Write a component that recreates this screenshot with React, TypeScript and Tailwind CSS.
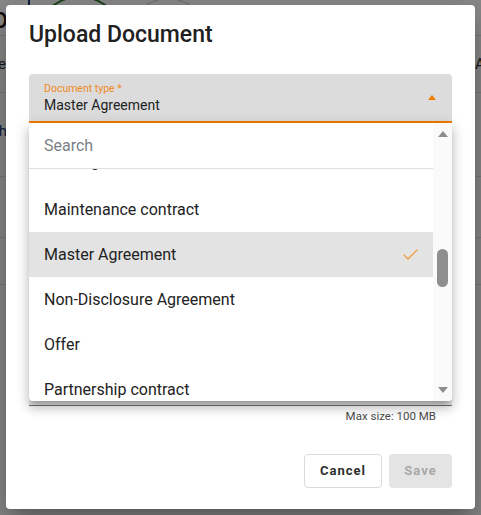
import React from "react";

const options = [
  "Leasing contract",
  "Maintenance contract",
  "Master Agreement",
  "Non-Disclosure Agreement",
  "Offer",
  "Partnership contract",
  "Purchase order",
];

function Triangle({ up, className }: { up?: boolean; className?: string }) {
  return (
    <svg width="10" height="6" viewBox="0 0 10 6" className={className}>
      <path d={up ? "M0 6 L5 0 L10 6 Z" : "M0 0 L5 6 L10 0 Z"} fill="currentColor" />
    </svg>
  );
}

function Check() {
  return (
    <svg width="15" height="11" viewBox="0 0 15 11" fill="none">
      <path d="M0.6 5.6 L5 10 L14.4 0.6" stroke="#f29a3c" strokeWidth="1.3" />
    </svg>
  );
}

function PageBehind() {
  return (
    <div className="w-full">
      <div className="h-[36px] border-b border-[#e2e2e2] flex items-start">
        <div className="w-[8px] flex justify-end">
          <span className="text-[30px] leading-[36px] text-[#1c1c1c] whitespace-nowrap">Sp</span>
        </div>
        <div className="w-[2px] h-[14px] bg-[#1a3a7a] ml-[20px]" />
        <div className="w-[91px] h-[91px] rounded-full border-2 border-[#2e7d32] ml-[4px] -mt-[4px] shrink-0" />
        <div className="w-[80px] h-[80px] rounded-full border border-[#cfcfcf] ml-[3px] -mt-[2px] shrink-0" />
      </div>
      <div className="h-[57px] border-b border-[#e2e2e2] flex items-center justify-between">
        <div className="w-[6px] flex justify-end">
          <span className="text-[15px] text-[#333] whitespace-nowrap">Type</span>
        </div>
        <div className="w-[6px] flex justify-start">
          <span className="text-[15px] text-[#333] whitespace-nowrap">Assigned</span>
        </div>
      </div>
      <div className="h-[84px] border-b border-[#e2e2e2] flex items-center pb-[6px]">
        <div className="w-[7px] flex justify-end">
          <span className="text-[15px] text-[#1a3a7a] whitespace-nowrap">Search</span>
        </div>
      </div>
      <div className="h-[61px] border-b border-[#e2e2e2]" />
      <div className="h-[47px] border-b border-[#e2e2e2]" />
    </div>
  );
}

export default function App() {
  return (
    <div className="relative w-[481px] h-[515px] overflow-hidden bg-white font-['Roboto',sans-serif]">
      <PageBehind />
      <div className="absolute inset-0 bg-black/[0.46]">
        <div className="relative ml-[6px] mt-[5px] w-[469px] h-[504px] bg-white rounded-[4px] shadow-[0_11px_15px_-7px_rgba(0,0,0,0.2),0_24px_38px_3px_rgba(0,0,0,0.14),0_9px_46px_8px_rgba(0,0,0,0.12)] px-[23px] pt-[14px] pb-[21px] flex flex-col">
          <h2 className="text-[23px] leading-[32px] font-medium text-[#212121]">Upload Document</h2>

          <div className="mt-[23px] h-[49px] bg-[#dcdcdc] rounded-t-[4px] border-b-2 border-[#ef7d00] pl-[15px] pr-[16px] pt-[9px] flex">
            <div className="flex-1">
              <div className="text-[10.5px] leading-[12px] text-[#f08a24]">Document type *</div>
              <div className="mt-[1px] text-[14px] leading-[18px] text-[#222]">Master Agreement</div>
            </div>
            <Triangle up className="text-[#ef7d00] mt-[12px] w-[8px] h-[5px]" />
          </div>

          <div className="h-[283px] flex flex-col justify-end gap-[24px]">
            <div className="h-[48px] bg-[#ececec] rounded-t-[4px] border-b border-[#767676]" />
            <div className="h-[56px] bg-[#ececec] rounded-t-[4px] border-b border-[#767676]" />
          </div>

          <div className="mt-[3px] text-right pr-[16px] text-[11.5px] leading-[14px] text-[#4a4a4a]">Max size: 100 MB</div>

          <div className="mt-auto flex justify-end gap-[7px]">
            <button className="h-[34px] w-[78px] rounded-[4px] border border-[#dadada] bg-white text-[13px] font-bold tracking-[1px] text-[#2f2f2f]">
              Cancel
            </button>
            <button className="h-[34px] w-[63px] rounded-[4px] bg-[#e4e4e4] text-[13px] font-bold tracking-[1px] text-[#a8a8a8]">
              Save
            </button>
          </div>

          <div className="absolute left-[23px] right-[23px] top-[118px] h-[278px] bg-white rounded-b-[4px] shadow-[0_5px_5px_-3px_rgba(0,0,0,0.2),0_8px_10px_1px_rgba(0,0,0,0.14),0_3px_14px_2px_rgba(0,0,0,0.12)] flex overflow-hidden">
            <div className="flex-1 flex flex-col">
              <div className="h-[46px] border-b border-[#e0e0e0] flex items-center pl-[15px] text-[16px] text-[#7b7f86]">
                Search
              </div>
              <div className="flex-1 overflow-hidden">
                <div className="-mt-[27px]">
                  {options.map((o, i) => {
                    const selected = o === "Master Agreement";
                    return (
                      <div
                        key={o}
                        className={`h-[45px] flex items-center justify-between pl-[15px] pr-[15px] text-[16px] text-[#222] ${
                          selected ? "bg-[#e3e3e3]" : ""
                        } ${i === 0 ? "pb-[6px]" : ""}`}
                      >
                        <span>{o}</span>
                        {selected && <Check />}
                      </div>
                    );
                  })}
                </div>
              </div>
            </div>
            <div className="w-[19px] bg-[#fafafa] flex flex-col items-center pt-[8px] pb-[8px] text-[#8c8c8c]">
              <Triangle up />
              <div className="mt-[112px] w-[11px] h-[38px] rounded-full bg-[#8f8f8f]" />
              <Triangle className="mt-auto" />
            </div>
          </div>
        </div>
      </div>
    </div>
  );
}
